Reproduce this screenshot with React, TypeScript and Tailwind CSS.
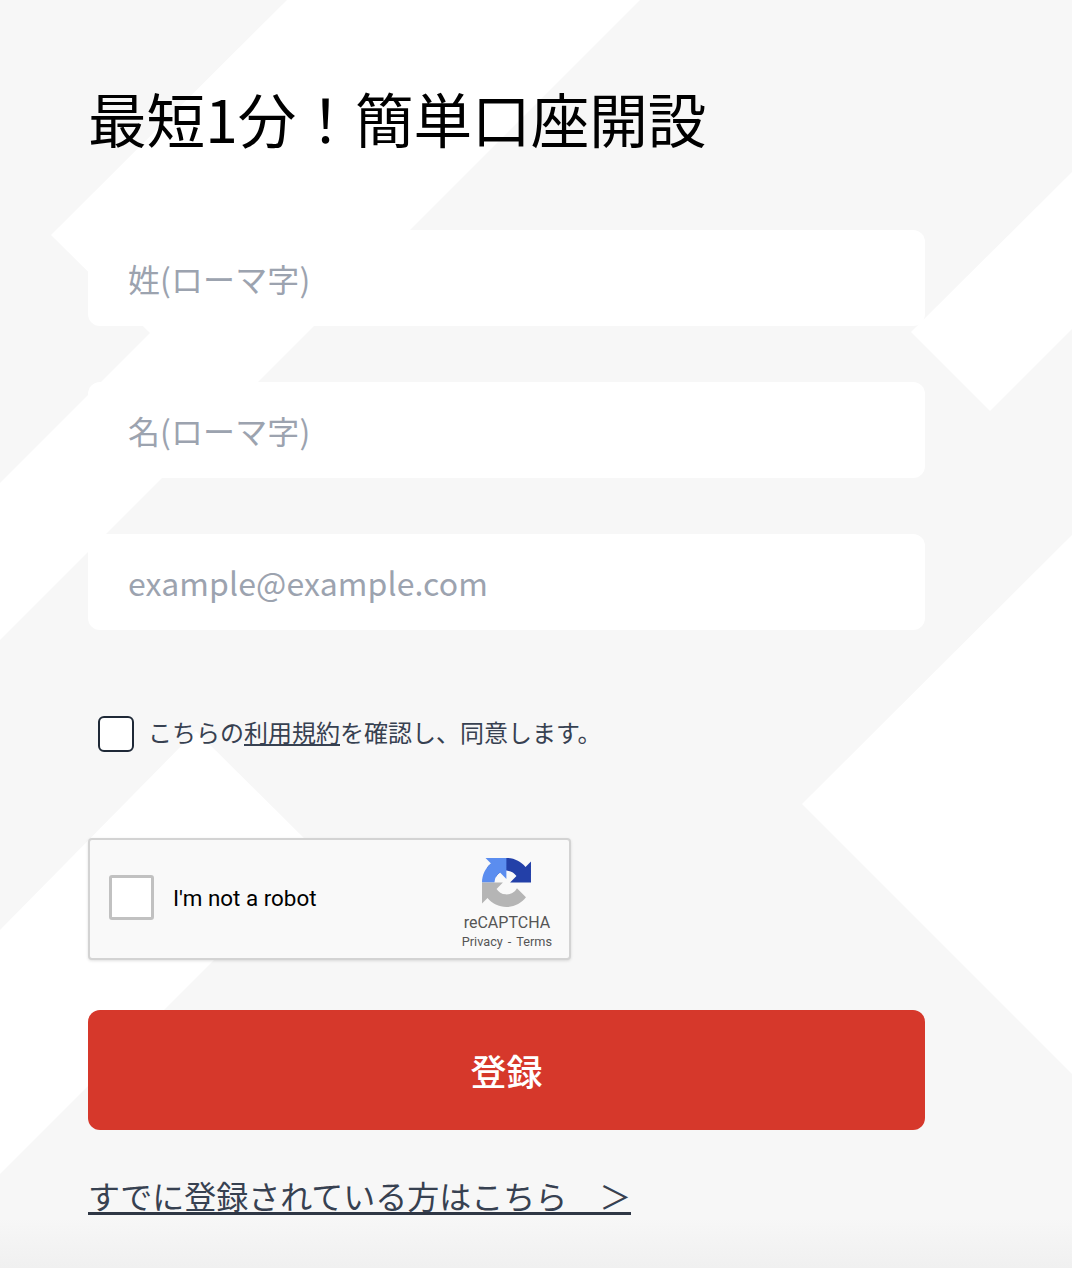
const jp = '"Noto Sans CJK JP", "Noto Sans", sans-serif'

function BackgroundShapes() {
  return (
    <svg className="absolute inset-0 h-full w-full" viewBox="0 0 1072 1268" aria-hidden="true">
      <polygon fill="#fff" points="287,0 640,0 0,640 0,483 150,333 51,235" />
      <polygon fill="#fff" points="1072,172 911,332 990,411 1072,329" />
      <polygon fill="#fff" points="1072,535 802,804 1072,1074" />
      <polygon fill="#fff" points="196,731 320,854 0,1174 0,930" />
    </svg>
  )
}

function RecaptchaLogo() {
  return (
    <svg viewBox="0 0 64 64" className="h-[49px] w-[49px]">
      <path
        fill="#2340a8"
        d="M64 31.955l-.033-1.37V4.687l-7.16 7.16C50.948 4.674 42.033.093 32.05.093c-10.4 0-19.622 4.96-25.458 12.64l11.736 11.86a15.55 15.55 0 0 1 4.754-5.334c2.05-1.6 4.952-2.906 8.968-2.906.485 0 .86.057 1.135.163 4.976.393 9.288 3.14 11.828 7.124l-8.307 8.307 26.3.001"
      />
      <path
        fill="#5b8def"
        d="M31.862.094l-1.37.033H4.594l7.16 7.16C4.58 13.147 0 22.06 0 32.046h16.26c0-.485.057-.86.163-1.135.393-4.976 3.14-9.288 7.124-11.828l8.307 8.307.001-26.3"
      />
      <path
        fill="#b5b5b5"
        d="M.001 32.045l.033 1.37v25.898l7.16-7.16c5.86 7.173 14.774 11.754 24.76 11.754 10.4 0 19.622-4.96 25.458-12.64l-11.736-11.86a15.55 15.55 0 0 1-4.754 5.334c-2.05 1.6-4.952 2.906-8.968 2.906-.485 0-.86-.057-1.135-.163-4.976-.393-9.288-3.14-11.828-7.124l8.307-8.307-26.3-.001"
      />
    </svg>
  )
}

function Recaptcha() {
  return (
    <div className="mt-[86px] flex h-[122px] w-[483px] items-center rounded-[4px] border-2 border-[#d3d3d3] bg-[#f9f9f9] pl-[19px] pr-[17px] shadow-[0_1px_3px_rgba(0,0,0,0.12)]">
      <div className="mb-[4px] h-[45px] w-[45px] shrink-0 rounded-[3px] border-[3px] border-[#c1c1c1] bg-white" />
      <span className="ml-[19px] flex-1 text-[22.4px] text-black" style={{ fontFamily: 'Roboto, sans-serif' }}>
        I'm not a robot
      </span>
      <div className="flex flex-col items-center pt-[8px]" style={{ fontFamily: 'Roboto, sans-serif' }}>
        <RecaptchaLogo />
        <span className="mt-[4px] text-[16px] leading-[24px] text-[#555]">reCAPTCHA</span>
        <span className="text-[12.7px] leading-[14px] text-[#555]">
          Privacy<span className="mx-[5px]">-</span>Terms
        </span>
      </div>
    </div>
  )
}

export default function App() {
  const fields = ['姓(ローマ字)', '名(ローマ字)', 'example@example.com']

  return (
    <div className="relative h-[1268px] w-full overflow-hidden bg-[#f7f7f7]" style={{ fontFamily: jp }}>
      <BackgroundShapes />
      <div className="absolute inset-x-0 bottom-0 h-[50px] bg-gradient-to-b from-transparent to-[#f0f0f0]" />

      <main className="relative ml-[88px] w-[837px] pt-[74px]">
        <h1 className="text-[58.6px] leading-[88px] font-normal text-black">最短1分！簡単口座開設</h1>

        <div className="mt-[68px] flex flex-col gap-[56px]">
          {fields.map((f) => (
            <input
              key={f}
              placeholder={f}
              className="h-[96px] w-full rounded-[12px] bg-white px-[40px] text-[32px] tracking-[0.1px] outline-none placeholder:text-[#9ca3af]"
            />
          ))}
        </div>

        <label className="mt-[86px] flex items-center pl-[10px] text-[24px] leading-[36px] text-[#374151]">
          <span className="h-[36px] w-[36px] shrink-0 rounded-[6px] border-2 border-[#1f2937] bg-white" />
          <span className="-mt-[4px] ml-[14px]">
            こちらの<span className="underline">利用規約</span>を確認し、同意します。
          </span>
        </label>

        <Recaptcha />

        <button className="mt-[50px] flex h-[120px] w-full items-center justify-center rounded-[12px] bg-[#d6382b] text-[36px] font-medium text-white">
          登録
        </button>

        <a className="mt-[49px] inline-block border-b-[3px] border-[#2f3745] text-[32px] leading-[33px] text-[#374151]">
          すでに登録されている方はこちら　＞
        </a>
      </main>
    </div>
  )
}
